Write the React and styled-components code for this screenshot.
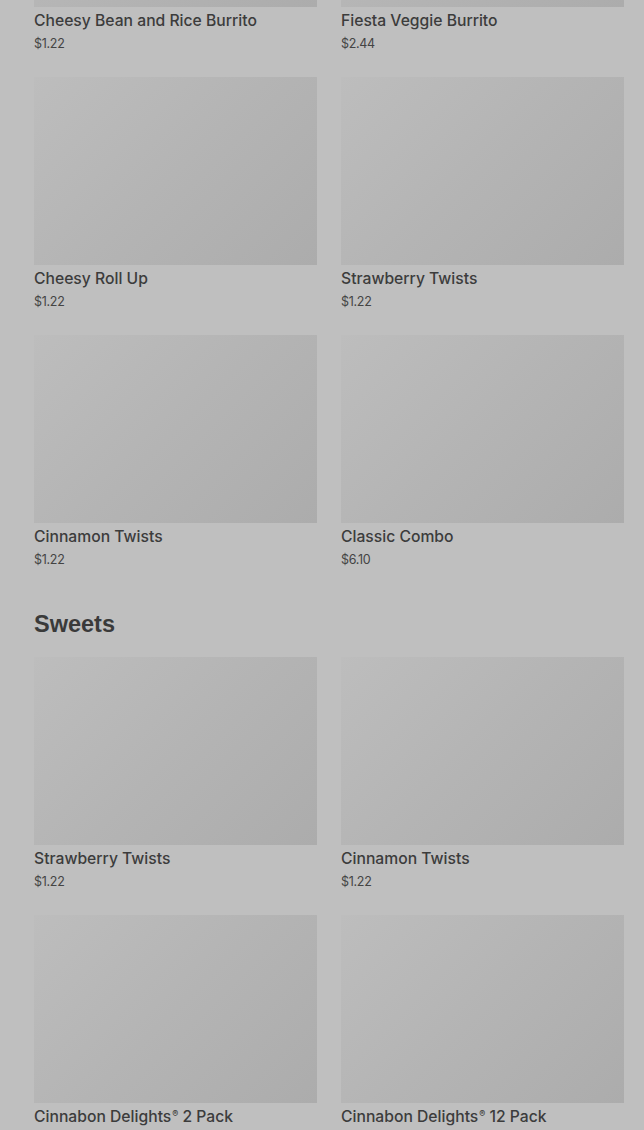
import React from 'react';
import styled, { createGlobalStyle } from 'styled-components';

const GlobalStyle = createGlobalStyle`
  html, body {
    margin: 0;
    padding: 0;
    background: #bfbfbf;
    overflow: hidden;
  }
`;

const Page = styled.div`
  width: 644px;
  height: 1130px;
  overflow: hidden;
  background: #bfbfbf;
  font-family: Inter, Roboto, "Liberation Sans", sans-serif;
`;

const Content = styled.div`
  margin-top: -181px;
  padding: 0 20px 0 34px;
`;

const Section = styled.section`
  padding-bottom: ${(p) => (p.$last ? 0 : 41)}px;
`;

const Heading = styled.h2`
  margin: 0 0 19px;
  font-family: "Liberation Sans", Arial, sans-serif;
  font-weight: 700;
  font-size: 23.5px;
  line-height: 28px;
  color: #3a3a3a;
`;

const Grid = styled.div`
  display: grid;
  grid-template-columns: 283px 283px;
  column-gap: 24px;
  row-gap: 24px;
`;

const Card = styled.div`
  display: flex;
  flex-direction: column;
`;

const Photo = styled.div`
  height: 188px;
  background: linear-gradient(135deg, #bdbdbd 0%, #b4b4b4 50%, #acacac 100%);
`;

const Name = styled.div`
  margin-top: 4px;
  font-size: 15.7px;
  font-weight: 500;
  line-height: 20px;
  color: #3c3c3c;
  white-space: nowrap;
`;

const Reg = styled.sup`
  font-size: 9px;
  line-height: 0;
  vertical-align: 5px;
  margin-left: 1px;
`;

const Price = styled.div`
  margin-top: 4px;
  font-size: 12.5px;
  line-height: 18px;
  letter-spacing: -0.3px;
  color: #444;
`;

const sections = [
  {
    items: [
      ['Cheesy Bean and Rice Burrito', '$1.22'],
      ['Fiesta Veggie Burrito', '$2.44'],
      ['Cheesy Roll Up', '$1.22'],
      ['Strawberry Twists', '$1.22'],
      ['Cinnamon Twists', '$1.22'],
      ['Classic Combo', '$6.10'],
    ],
  },
  {
    title: 'Sweets',
    items: [
      ['Strawberry Twists', '$1.22'],
      ['Cinnamon Twists', '$1.22'],
      ['Cinnabon Delights® 2 Pack', '$2.49'],
      ['Cinnabon Delights® 12 Pack', '$7.49'],
    ],
  },
];

// split "®" off so it can sit raised and small like the reference
function renderName(name) {
  const parts = name.split('®');
  if (parts.length === 1) return name;
  return (
    <>
      {parts[0]}
      <Reg>®</Reg>
      {parts[1]}
    </>
  );
}

export default function App() {
  return (
    <Page>
      <GlobalStyle />
      <Content>
        {sections.map((s, i) => (
          <Section key={i} $last={i === sections.length - 1}>
            {s.title && <Heading>{s.title}</Heading>}
            <Grid>
              {s.items.map(([name, price], j) => (
                <Card key={j}>
                  <Photo />
                  <Name>{renderName(name)}</Name>
                  <Price>{price}</Price>
                </Card>
              ))}
            </Grid>
          </Section>
        ))}
      </Content>
    </Page>
  );
}
